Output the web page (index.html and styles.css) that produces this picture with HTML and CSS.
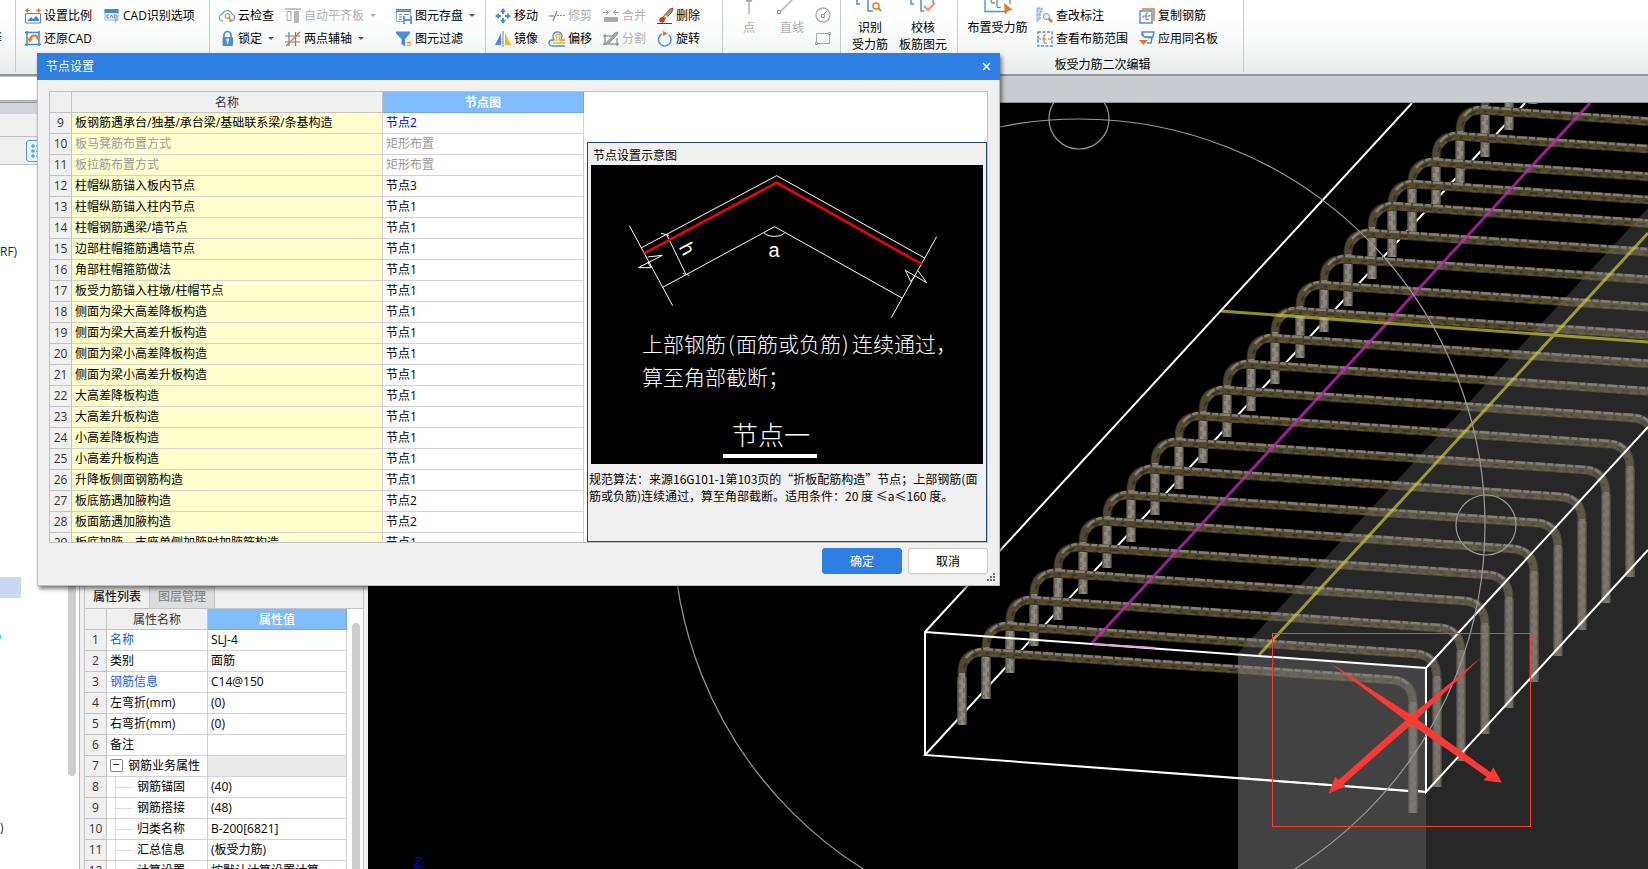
FILE: index.html
```html
<!DOCTYPE html>
<html lang="zh-CN">
<head>
<meta charset="utf-8">
<title>节点设置</title>
<link rel="stylesheet" href="styles.css">
</head>
<body>
<div class="app">
<header class="ribbon">
  <div class="group group-edge"><span class="edge-label">择</span></div>
  <div class="group group-cad">
    <button class="tool"><svg class="ico" viewBox="0 0 16 16"><path d="M1 2.500h14" stroke="#e87722" stroke-dasharray="4 6"/><path d="M0 2.500L3 0v5zM16 2.500L13 0v5z" fill="#e87722"/><path d="M.5 5.500h15v9.500H.5z" fill="#fff" stroke="#77808a"/><path d="M2 13l4-4 2 2 3-3 3 3v2z" fill="#3f8ad8"/></svg>设置比例</button>
    <button class="tool"><svg class="ico" viewBox="0 0 16 16"><path d="M1 2h13v10H1z" fill="#e4f0fb" stroke="#8dbbea"/><path d="M.5 1h14v4H.5z" fill="#3f8ad8"/><path d="M5 7H3v3h2M6 10l1.500-3L9 10M10.500 7v3h1.500l1-1.500-1-1.500z" fill="none" stroke="#5b93cf"/><path d="M10 9l4.500 3.500-2 .5-1 2.500z" fill="#f58e6a"/></svg>CAD识别选项</button>
    <button class="tool"><svg class="ico" viewBox="0 0 16 16"><path d="M2 0v15M0 1.500h15M14 0v15M0 13.500h16" fill="none" stroke="#3f8ad8" stroke-width="1.500"/><path d="M5 9c0-3 2-4.500 5-4.500 2 0 2.500 2 2.500 4" fill="none" stroke="#e87722" stroke-width="2"/><path d="M2 7.500h6l-3 4z" fill="#e87722"/></svg>还原CAD</button>
  </div>
  <div class="group group-lock">
    <button class="tool"><svg class="ico" viewBox="0 0 16 16"><path d="M4 13a3.500 3.500 0 01-.5-7A5 5 0 0113 6a3.600 3.600 0 01-1 7H10" fill="none" stroke="#5ba5e8" stroke-width="1.300"/><circle cx="8.500" cy="8" r="2.300" fill="none" stroke="#f08a3c" stroke-width="1.300"/><path d="M10 10l3 3" stroke="#f08a3c" stroke-width="1.500"/></svg>云检查</button>
    <button class="tool off"><svg class="ico" viewBox="0 0 16 16"><path d="M0 1h16" stroke="#aaa" stroke-width="1.300"/><path d="M2 3.500h4v9H2z" fill="none" stroke="#aaa"/><path d="M9 3h5v12H9z" fill="#b8b8b8"/></svg>自动平齐板<i class="caret"></i></button>
    <button class="tool"><svg class="ico" viewBox="0 0 16 16"><path d="M0 1h15v3H0z" fill="#3f8ad8"/><path d="M1 2.500h13M.5 4v9.500H7M14.500 4v4" fill="none" stroke="#7fb3e8"/><path d="M3 6.500h3M3 9h3M3 11.500h3M8 6.500h5" stroke="#77808a"/><path d="M7 8h9v8H7z" fill="#5b9ade"/><path d="M9 8h5v3H9zM9 13h5v3H9z" fill="#fff"/></svg>图元存盘<i class="caret"></i></button>
    <button class="tool"><svg class="ico" viewBox="0 0 16 16"><path d="M5 7V4a3.500 3.500 0 017 0v3" fill="none" stroke="#4a8edb" stroke-width="1.700"/><rect x="3.500" y="6" width="10.500" height="9" rx="1" fill="#4a8edb"/><circle cx="8.700" cy="9" r="1.400" fill="#fff"/><path d="M8.700 9v4" stroke="#fff"/></svg>锁定<i class="caret"></i></button>
    <button class="tool"><svg class="ico" viewBox="0 0 16 16"><path d="M4 1v14M10.500 1v14M0 5h15M0 11h15" stroke="#77808a" stroke-width="1.200"/><path d="M1 15L15 1" stroke="#e87722" stroke-width="1.300"/></svg>两点辅轴<i class="caret"></i></button>
    <button class="tool"><svg class="ico" viewBox="0 0 16 16"><path d="M0 .5h14v2L9 8v7.500L5.500 13V8L0 2.500z" fill="#4a8edb"/><path d="M11 11.500h4M11 14h4" stroke="#e87722"/></svg>图元过滤</button>
  </div>
  <div class="group group-edit">
    <button class="tool"><svg class="ico" viewBox="0 0 16 16"><path d="M8 0l3 4H9v2H7V4H5zM8 16l3-4H9v-2H7v2H5zM0 8l4-3v2h2v2H4v2zM16 8l-4-3v2h-2v2h2v2z" fill="#4a8edb"/></svg>移动</button>
    <button class="tool off"><svg class="ico" viewBox="0 0 16 16"><path d="M0 8h5M4 13L8 3" stroke="#666"/><path d="M8 7.500h8" stroke="#888" stroke-dasharray="2 1"/></svg>修剪</button>
    <button class="tool off"><svg class="ico" viewBox="0 0 16 16"><path d="M1 9h14v5H1z" fill="#aaa"/><path d="M0 4.500h5M11 4.500h5M3 2l2.500 2.500L3 7M13 2l-2.500 2.500L13 7" stroke="#999" fill="none"/></svg>合并</button>
    <button class="tool"><svg class="ico" viewBox="0 0 16 16"><path d="M5 10L13 1l3-1-1 4-8 8z" fill="#b39566" stroke="#58452c" stroke-width=".8"/><path d="M8 8l3 2" stroke="#eee" stroke-width="2"/><circle cx="5" cy="12" r="2.700" fill="#c83d11"/><path d="M0 15.500h15" stroke="#444"/></svg>删除</button>
    <button class="tool"><svg class="ico" viewBox="0 0 16 16"><path d="M6 2v12H0z" fill="#4a8edb"/><path d="M10 2v12h6z" fill="#f8b421"/><path d="M8 0v16" stroke="#77808a"/></svg>镜像</button>
    <button class="tool"><svg class="ico" viewBox="0 0 16 16"><path d="M16 15H3a2.500 2.500 0 010-6h2L4 6a4.500 4.500 0 119-1l-1 4h4" fill="none" stroke="#4a8edb" stroke-width="1.300"/><path d="M16 12H4M7 10l1-3-1-2a2 2 0 114 0L10 9h6" fill="none" stroke="#f8b421" stroke-width="1.400"/></svg>偏移</button>
    <button class="tool off"><svg class="ico" viewBox="0 0 16 16"><path d="M2 3v11M0 5h9M0 13h16M14 7v8" stroke="#777" fill="none"/><path d="M3 12L12 2l3-1-1 3-8 8z" fill="#aaa" stroke="#888" stroke-width=".8"/></svg>分割</button>
    <button class="tool"><svg class="ico" viewBox="0 0 16 16"><path d="M12 4a6.300 6.300 0 11-7-1" fill="none" stroke="#4a9ae8" stroke-width="1.600"/><path d="M6 0l5 2.500L6 5z" fill="#e87722"/></svg>旋转</button>
  </div>
  <div class="group group-draw">
    <button class="big off"><svg class="bigico" viewBox="0 0 24 16"><circle cx="12" cy="-1" r="3.500" fill="#aaa"/><path d="M12 3v11" stroke="#aaa" stroke-width="1.300"/></svg>点</button>
    <button class="big off"><svg class="bigico" viewBox="0 0 24 16"><path d="M1 11L13-1" stroke="#aaa" stroke-width="1.300"/><path d="M-2.500 10.500h3v3h-3z" fill="#fff" stroke="#888"/></svg>直线</button>
    <div class="shapes">
      <button class="tool off" aria-label="圆"><svg class="ico" viewBox="0 0 16 16"><circle cx="8" cy="8" r="7" fill="none" stroke="#aaa" stroke-width="1.300"/><path d="M6.500 7.500h3v3h-3zM9 7l3-3" fill="none" stroke="#999"/></svg></button>
      <button class="tool off" aria-label="矩形"><svg class="ico" viewBox="0 0 16 16"><path d="M1.500 3.500h13v10h-13z" fill="none" stroke="#aaa"/><path d="M.5 12.500h2v2h-2zM13.500 2.500h2v2h-2z" fill="#fff" stroke="#999"/></svg></button>
    </div>
  </div>
  <div class="group group-check">
    <button class="big"><svg class="bigico" viewBox="0 0 24 16"><path d="M-1 0v4h3M10 0v11h5" fill="none" stroke="#4a8edb" stroke-width="1.500"/><circle cx="18" cy="6" r="3" fill="none" stroke="#e87722" stroke-width="1.400"/><path d="M20 8l3 3" stroke="#e87722" stroke-width="1.800"/></svg>识别<br>受力筋</button>
    <button class="big"><svg class="bigico" viewBox="0 0 24 16"><path d="M0 0v4h3M10 0v11h3M22 0v3" fill="none" stroke="#4a8edb" stroke-width="1.500"/><path d="M13 6l4 4 7-7" fill="none" stroke="#f58e6a" stroke-width="2"/></svg>校核<br>板筋图元</button>
  </div>
  <div class="group group-rebar">
    <button class="big"><svg class="bigico wide" viewBox="0 0 28 16"><path d="M1 0v11.500h20M26 0v4" fill="none" stroke="#4a8edb" stroke-width="1.300"/><path d="M7 0c0 3 1 3 4 3M13 0v6c0 2 2 2 4 1" fill="none" stroke="#77808a" stroke-width="1.300"/><path d="M20 3l9 7-4 .5-4 4z" fill="#e87722"/></svg>布置受力筋</button>
    <div class="rebar-grid">
      <button class="tool"><svg class="ico" viewBox="0 0 16 16"><path d="M0 0h5v4H3v7l-3 3z" fill="#bcd8f5" stroke="#5ba0e4" stroke-dasharray="3 1"/><circle cx="9.500" cy="8.500" r="3" fill="#eef" stroke="#6c8fc5"/><path d="M12 11l3 3" stroke="#e87722" stroke-width="2.600"/></svg>查改标注</button>
      <button class="tool"><svg class="ico" viewBox="0 0 16 16"><path d="M3 1h12v12" fill="none" stroke="#e87722" stroke-width="1.500"/><path d="M1 3h12v12H1z" fill="#fff" stroke="#4a8edb" stroke-width="1.400"/><path d="M9 5H7v7l3-1M4 10V8h7V7" fill="none" stroke="#77808a"/></svg>复制钢筋</button>
      <button class="tool"><svg class="ico" viewBox="0 0 16 16"><path d="M1 1h14v14H1z" fill="none" stroke="#4a8edb" stroke-width="1.400" stroke-dasharray="3 1.500"/><path d="M9 4H7v8h3" fill="none" stroke="#77808a"/><path d="M0 8h16" stroke="#e87722" stroke-dasharray="4 1.500"/></svg>查看布筋范围</button>
      <button class="tool"><svg class="ico" viewBox="0 0 16 16"><path d="M3 1h12l-1 5H5zM5 6l8 1-1 5H8M3 1v4" fill="none" stroke="#4a8edb" stroke-width="1.400"/><path d="M0 9h9l-4.500 5z" fill="#e87722"/></svg>应用同名板</button>
    </div>
    <div class="group-name">板受力筋二次编辑</div>
  </div>
</header>
<div class="subbar"><input class="combo" aria-label="楼层"></div>

<main class="workspace">
  <aside class="tree">
    <div class="tree-title"></div>
    <div class="tree-head"></div>
    <div class="tree-tools"><button class="listbtn" aria-label="列表"><svg class="listico" viewBox="0 0 14 16"><path d="M2 2h2v2H2zM2 7h2v2H2zM2 12h2v2H2z" fill="none" stroke="#2f8be0"/><path d="M6 3h6M6 8h6M6 13h6" stroke="#2f8be0"/></svg></button></div>
    <div class="tree-body">
      <div class="tree-text">RF)</div>
      <div class="tree-sel"></div>
      <div class="tree-mark"></div>
      <div class="tree-end">)</div>
      <div class="tree-scroll"></div>
    </div>
  </aside>
  <section class="props">
    <div class="props-upper"></div>
    <nav class="tabs"><button class="tab active">属性列表</button><button class="tab">图层管理</button></nav>
    <div class="props-body">
      <table class="grid ptable">
        <thead><tr><th class="pn"></th><th class="pk">属性名称</th><th class="pv hot soft">属性值</th></tr></thead>
        <tbody>
          <tr><th>1</th><td class="blue">名称</td><td>SLJ-4</td></tr>
          <tr><th>2</th><td>类别</td><td>面筋</td></tr>
          <tr><th>3</th><td class="blue">钢筋信息</td><td>C14@150</td></tr>
          <tr><th>4</th><td>左弯折(mm)</td><td>(0)</td></tr>
          <tr><th>5</th><td>右弯折(mm)</td><td>(0)</td></tr>
          <tr><th>6</th><td>备注</td><td></td></tr>
          <tr><th>7</th><td class="parent"><button class="fold" aria-label="折叠">−</button>钢筋业务属性</td><td class="shade"></td></tr>
          <tr><th>8</th><td class="child">钢筋锚固</td><td>(40)</td></tr>
          <tr><th>9</th><td class="child">钢筋搭接</td><td>(48)</td></tr>
          <tr><th>10</th><td class="child">归类名称</td><td>B-200[6821]</td></tr>
          <tr><th>11</th><td class="child">汇总信息</td><td>(板受力筋)</td></tr>
          <tr><th>12</th><td class="child">计算设置</td><td>按默认计算设置计算</td></tr>
        </tbody>
      </table>
      <div class="pscroll"></div>
    </div>
  </section>
  <section class="view">
    <svg class="scene" viewBox="368 103 1280 766" preserveAspectRatio="xMinYMin slice">
      <defs>
        <g id="bar" fill="none">
          <path d="M962 725V673Q962 653 982 652L1393 680Q1413 682 1413 704V813" stroke="#332e22" stroke-width="9"/>
          <path d="M962 725V673Q962 653 982 652L1393 680Q1413 682 1413 704V813" stroke="#50482f" stroke-width="7"/>
          <path d="M966 658Q972 650 982 649L1393 677Q1403 678 1408 684" stroke="#857f74" stroke-width="2.500" stroke-dasharray="10 2 6 2"/>
          <path d="M964 668Q967 655 982 653L1393 681Q1409 683 1411 700" stroke="#33312e" stroke-width="2" stroke-dasharray="5 9 8 7 3 11"/>
          <path d="M968 663Q973 655 982 655L1393 683" stroke="#66521f" stroke-width="2" stroke-dasharray="7 5 4 9"/>
          <path d="M962 725V677" stroke="#6a6456" stroke-width="9"/>
          <path d="M1413 813V704" stroke="#564f40" stroke-width="9"/>
          <path d="M962 725V673" stroke="#8e887e" stroke-width="6"/>
          <path d="M1413 813V702" stroke="#787268" stroke-width="6"/>
          <path d="M960 725V673M1411 813V702" stroke="#5d574c" stroke-width="1" stroke-dasharray="5 4"/>
          <path d="M964 723V673M1415 811V702" stroke="#5f5848" stroke-width="1" stroke-dasharray="5 5"/>
        </g>
      </defs>
      <rect x="368" y="103" width="1280" height="766" fill="#000"/>
      <path d="M1525 103L925 755L1426 792" fill="none" stroke="#fff" stroke-width="2"/>
      <use href="#bar" x="571" y="-621"/><use href="#bar" x="547" y="-595"/><use href="#bar" x="523" y="-568"/><use href="#bar" x="498" y="-542"/><use href="#bar" x="474" y="-516"/><use href="#bar" x="450" y="-490"/><use href="#bar" x="430" y="-468"/><use href="#bar" x="410" y="-446"/><use href="#bar" x="386" y="-419"/><use href="#bar" x="362" y="-393"/><use href="#bar" x="338" y="-367"/><use href="#bar" x="313" y="-341"/><use href="#bar" x="289" y="-314"/><use href="#bar" x="265" y="-288"/><use href="#bar" x="241" y="-262"/><use href="#bar" x="217" y="-236"/><use href="#bar" x="193" y="-210"/><use href="#bar" x="169" y="-183"/><use href="#bar" x="145" y="-157"/><use href="#bar" x="121" y="-131"/><use href="#bar" x="96" y="-105"/><use href="#bar" x="72" y="-79"/><use href="#bar" x="48" y="-52"/><use href="#bar" x="24" y="-26"/><use href="#bar"/>
      <path d="M1238 653L1648 208V869H1238z" fill="#808080" fill-opacity=".3"/>
      <path d="M1238 653L1426 668V869H1238z" fill="#808080" fill-opacity=".3"/>
      <path d="M1238 778L1408 791M1418 791L1426 792" stroke="#fff" stroke-width="2"/>
      <path d="M1092 643L1590 103" stroke="#c62bc6" stroke-opacity=".75" stroke-width="3"/>
      <path d="M1259 655L1648 233M1220 311L1648 342" stroke="#c8c832" stroke-opacity=".72" stroke-width="3"/>
      <path d="M1412 103L925 632V755M925 632L1426 668V792L1648 550M1426 668L1648 427" fill="none" stroke="#fff" stroke-width="2"/>
      <path d="M1092 644L1155 648" stroke="#e6a0e6" stroke-width="2"/>
      <g fill="none" stroke="#9a9a9a" stroke-width="1.200"><circle cx="1079" cy="525" r="406"/><circle cx="1079" cy="119" r="30"/><circle cx="1486" cy="525" r="30"/></g>
      <rect x="1272.500" y="633.500" width="258" height="193" fill="none" stroke="#fb3a36"/>
      <g transform="translate(1230 580) scale(.33333)" fill="#fb3a36"><path d="M297 247L548 408 782 577 790 562 816 608 760 601 770 590 536 428z"/><path d="M757 229L553 425 340 613 347 619 295 641 316 590 325 601 538 411z"/></g>
      <text class="axis" x="414" y="867">Z</text>
    </svg>
  </section>
</main>
</div>

<div class="dialog" role="dialog" aria-label="节点设置">
  <div class="titlebar"><span>节点设置</span><button class="close" aria-label="关闭"><svg class="closeico" viewBox="0 0 9 9"><path d="M1 1l7 7M8 1L1 8" stroke="#fff" stroke-width="1.500"/></svg></button></div>
  <div class="frame">
    <div class="tablewrap">
      <table class="grid ntable">
        <thead><tr><th class="nn"></th><th class="nk">名称</th><th class="nv hot">节点图</th></tr></thead>
        <tbody>
          <tr><th>9</th><td>板钢筋遇承台/独基/承台梁/基础联系梁/条基构造</td><td class="link">节点2</td></tr>
          <tr class="dim"><th>10</th><td>板马凳筋布置方式</td><td>矩形布置</td></tr>
          <tr class="dim"><th>11</th><td>板拉筋布置方式</td><td>矩形布置</td></tr>
          <tr><th>12</th><td>柱帽纵筋锚入板内节点</td><td>节点3</td></tr>
          <tr><th>13</th><td>柱帽纵筋锚入柱内节点</td><td>节点1</td></tr>
          <tr><th>14</th><td>柱帽钢筋遇梁/墙节点</td><td>节点1</td></tr>
          <tr><th>15</th><td>边部柱帽箍筋遇墙节点</td><td>节点1</td></tr>
          <tr><th>16</th><td>角部柱帽箍筋做法</td><td>节点1</td></tr>
          <tr><th>17</th><td>板受力筋锚入柱墩/柱帽节点</td><td>节点1</td></tr>
          <tr><th>18</th><td>侧面为梁大高差降板构造</td><td>节点1</td></tr>
          <tr><th>19</th><td>侧面为梁大高差升板构造</td><td>节点1</td></tr>
          <tr><th>20</th><td>侧面为梁小高差降板构造</td><td>节点1</td></tr>
          <tr><th>21</th><td>侧面为梁小高差升板构造</td><td>节点1</td></tr>
          <tr><th>22</th><td>大高差降板构造</td><td>节点1</td></tr>
          <tr><th>23</th><td>大高差升板构造</td><td>节点1</td></tr>
          <tr><th>24</th><td>小高差降板构造</td><td>节点1</td></tr>
          <tr><th>25</th><td>小高差升板构造</td><td>节点1</td></tr>
          <tr><th>26</th><td>升降板侧面钢筋构造</td><td>节点1</td></tr>
          <tr><th>27</th><td>板底筋遇加腋构造</td><td>节点2</td></tr>
          <tr><th>28</th><td>板面筋遇加腋构造</td><td>节点2</td></tr>
          <tr><th>29</th><td>板底加腋，支座单侧加腋时加腋筋构造</td><td>节点1</td></tr>
        </tbody>
      </table>
    </div>
    <section class="preview">
      <h2 class="preview-title">节点设置示意图</h2>
      <svg class="diagram" viewBox="0 0 392 299">
        <rect width="392" height="299" fill="#000"/>
        <g transform="translate(-11 -85) scale(.33333)" fill="none" stroke="#fff" stroke-width="3">
          <path d="M183 504L590 287 1034 534M248 622L584 440 966 654M148 437L278 677M1070 470L934 713M260 464L318 583M243 460l24 6M308 580l20 6"/>
          <path d="M203 531L247 526 175 563H213L203 546M1014 572L1040 608 976 571 992 604 1003 590"/>
          <path d="M552 458Q560 469 583 469T614 458"/>
          <path d="M193 520L590 308 1026 553" stroke="#f00" stroke-width="7"/>
        </g>
        <text class="cad mid" x="183" y="92">a</text>
        <text class="cad mid" transform="translate(90 87) rotate(62)">h</text>
        <text class="cad" y="187"><tspan x="51">上部钢筋</tspan><tspan x="137">(</tspan><tspan x="145">面筋或负筋</tspan><tspan x="251">)</tspan><tspan x="261">连续通过，</tspan></text>
        <text class="cad" x="51" y="220">算至角部截断；</text>
        <text class="cad large" x="141" y="280">节点一</text>
        <rect x="132" y="289" width="94" height="4" fill="#fff"/>
      </svg>
      <p class="note">规范算法：来源16G101-1第103页的“折板配筋构造”节点；上部钢筋(面筋或负筋)连续通过，算至角部截断。适用条件：20 度 ≤a≤160 度。</p>
    </section>
  </div>
  <div class="actions">
    <button class="btn primary">确定</button>
    <button class="btn">取消</button>
  </div>
  <svg class="grip" viewBox="0 0 9 9"><path d="M6 0h2v2H6zM3 3h2v2H3zM6 3h2v2H6zM0 6h2v2H0zM3 6h2v2H3zM6 6h2v2H6z" fill="#6a6f78"/></svg>
</div>
</body>
</html>
```
FILE: styles.css
```css
* { box-sizing: border-box; }
html, body { height: 100%; }
body {
  margin: 0;
  overflow: hidden;
  font: 12px/16px "Open Sans", "Noto Sans CJK SC", sans-serif;
  color: #000;
  background: #fff;
}
button { font: inherit; color: inherit; background: none; border: 0; padding: 0; white-space: nowrap; }
.app { display: flex; flex-direction: column; height: 100vh; }

/* ribbon */
.ribbon {
  display: flex;
  flex: none;
  height: 76px;
  background: linear-gradient(#fff 20%, #f6f8f8 60%, #e8ecec);
  border-bottom: 2px solid #8f9696;
}
.group { height: 72px; border-right: 1px solid #c6c9c9; display: grid; align-content: start; }
.group-edge { width: 16px; overflow: hidden; padding-top: 30px; direction: rtl; }
.edge-label { width: 2px; display: block; overflow: hidden; margin-right: 13px; }
.tool { display: flex; align-items: center; height: 23px; gap: 3px; }
.ico { width: 16px; height: 16px; flex: none; overflow: visible; }
.off { color: #b0b0b0; }
.caret { border: 3px solid transparent; border-top-color: #555; border-bottom: 0; margin-left: 3px; }
.off .caret { border-top-color: #b0b0b0; }
.group-cad { width: 194px; padding: 4px 0 0 9px; grid-template-columns: 79px 90px; }
.group-lock { width: 276px; padding: 4px 0 0 9px; grid-template-columns: 66px 111px 80px; }
.group-edit { width: 237px; padding: 4px 0 0 9px; grid-template-columns: repeat(4, 54px); }
.group-draw { width: 118px; grid-template-columns: 52px 34px 24px; }
.group-check { width: 117px; grid-template-columns: 58px 48px; }
.group-rebar { width: 286px; grid-template-columns: 79px 1fr; }
.big { display: flex; flex-direction: column; align-items: center; justify-content: start; line-height: 17px; text-align: center; }
.bigico { width: 24px; height: 16px; margin-bottom: 3px; flex: none; overflow: visible; }
.bigico.wide { width: 28px; }
.shapes { display: grid; padding: 3px 0 0 6px; }
.rebar-grid { display: grid; grid-template-columns: 102px 100px; padding-top: 4px; }
.group-name { grid-column: 1 / -1; padding: 7px 0 0 4px; text-align: center; }

/* strip under the ribbon */
.subbar { flex: none; height: 27px; background: #c8cbd0; border-bottom: 1px solid #8f9696; }
.combo { display: block; width: 180px; height: 24px; border: 0; border-bottom: 1px solid #a0a4a8; background: #fff; margin-top: 1px; }

.workspace { flex: 1; min-height: 0; display: flex; }
.tree { width: 80px; flex: none; display: flex; flex-direction: column; border-right: 1px solid #b9b9b9; }
.tree-title { height: 11px; background: #d4d5dc; }
.tree-head { height: 23px; background: #f0f0f0; border-bottom: 1px solid #c0c0c4; }
.tree-tools { height: 28px; background: #f0f0f0; border-bottom: 1px solid #c0c0c4; padding: 3px 0 0 26px; }
.listbtn { width: 24px; height: 22px; border: 1px solid #4a9ce8; border-radius: 3px; background: #eaf4fe; }
.listico { display: block; width: 14px; height: 16px; margin-left: 3px; }
.tree-body { flex: 1; position: relative; color: #222; }
.tree-text { padding-top: 79px; }
.tree-sel { width: 21px; height: 21px; background: #c8d8f0; margin-top: 317px; }
.tree-mark { width: 1px; height: 4px; background: #35d6ee; margin-top: 37px; }
.tree-end { margin-top: 181px; }
.tree-scroll { position: absolute; right: 3px; top: 100px; width: 8px; height: 511px; border-radius: 4px; background: #cdcdcd; }

/* properties */
.props { width: 288px; flex: none; background: #f0f0f0; padding-left: 4px; display: flex; flex-direction: column; overflow: hidden; }
.props-upper { height: 481px; flex: none; }
.tabs { display: flex; height: 25px; flex: none; margin-right: 4px; border: 1px solid #c3c3c6; }
.tab { width: 65px; border-right: 1px solid #c3c3c6; background: #dddde0; color: #888; padding-top: 1px; font-weight: 500; }
.tab.active { background: #f0f0f0; color: #222; }
.props-body { display: flex; flex: none; gap: 5px; background: #fff; border: solid #c3c3c6; border-width: 0 1px; margin-right: 4px; }
.pscroll { width: 8px; margin-top: 14px; background: #cdcdcd; border-radius: 4px; }

.grid { border-spacing: 0; table-layout: fixed; }
.grid th, .grid td { height: 21px; padding: 0 3px; border: solid #d2d2d2; border-width: 0 1px 1px 0; white-space: nowrap; overflow: hidden; line-height: 16px; text-align: left; }
.grid td { background: #fff; }
.grid th { background: #f0f0f0; border-color: #c3c3c3; font-weight: 400; color: #333; text-align: center; padding: 0; }
.grid thead th { padding-top: 2px; }
.grid th.hot { background: #80bbfa; border-color: #68a9ee; color: #fff; font-weight: 700; }
.grid th.soft { font-weight: 500; }
.ptable { width: 262px; }
.pn { width: 22px; }
.pk { width: 101px; }
.pv { width: 139px; }
.grid .blue { color: #1359f2; }
.grid .shade { background: #eaeaea; }
.parent .fold { width: 13px; height: 13px; border: 1px solid #808080; border-radius: 2px; line-height: 10px; margin-right: 5px; vertical-align: 1px; background: #fff; }
.grid td.child { padding-left: 30px; background: linear-gradient(#dcdcdc, #dcdcdc) 9px 10px / 16px 1px no-repeat, linear-gradient(#dcdcdc, #dcdcdc) 8px 0 / 1px 100% no-repeat, #fff; }

.view { flex: 1; min-width: 0; background: #000; }
.scene { display: block; width: 100%; height: 100%; }
.axis { font: 14px "Open Sans", sans-serif; fill: #0000e8; }

/* dialog floating over the workspace */
.dialog { position: absolute; left: 37px; top: 53px; width: 963px; background: #f0f0f0; border: 1px solid #b4c0cc; border-top: 0; box-shadow: 2px 3px 4px rgba(0, 0, 0, .5); }
.titlebar { display: flex; justify-content: space-between; align-items: center; height: 27px; margin: 0 -1px; padding: 0 9px; background: #2d7fe1; color: #fff; }
.close { width: 9px; height: 9px; }
.closeico { display: block; width: 9px; height: 9px; }
.frame { display: flex; height: 452px; margin: 11px 11px 0; border: 1px solid #c0c0c0; background: #fff; }
.tablewrap { flex: none; overflow: hidden; }
.ntable { width: 534px; }
.nn { width: 22px; }
.nk { width: 311px; }
.nv { width: 201px; }
.ntable td:nth-child(2) { background: #ffffce; }
.ntable .link { color: #0000f0; }
.ntable .dim td { color: #999; }
.preview { flex: 1; min-width: 0; margin: 50px 0 0 3px; padding: 0 3px; background: #f0f0f0; border: 1px solid #1f4678; }
.preview-title { margin: 0; padding: 5px 2px 1px; font-size: 12px; font-weight: 400; line-height: 16px; }
.diagram { display: block; width: 100%; }
.cad { font: 300 21px "Noto Sans CJK SC", sans-serif; fill: #fff; }
.cad.mid { font: 20px "Liberation Sans", sans-serif; text-anchor: middle; }
.cad.large { font-size: 26px; }
.note { margin: 6px -2px 0; font-family: "Noto Sans CJK SC", sans-serif; line-height: 17px; word-break: break-all; }
.actions { display: flex; justify-content: flex-end; gap: 6px; padding: 5px 11px 11px; }
.btn { width: 80px; height: 26px; padding-top: 1px; border: 1px solid #c8c8c8; border-radius: 3px; background: #fff; }
.btn.primary { background: #2d7fe1; border-color: #2d7fe1; color: #fff; }
.grip { position: absolute; right: 3px; bottom: 3px; width: 9px; height: 9px; }
```
